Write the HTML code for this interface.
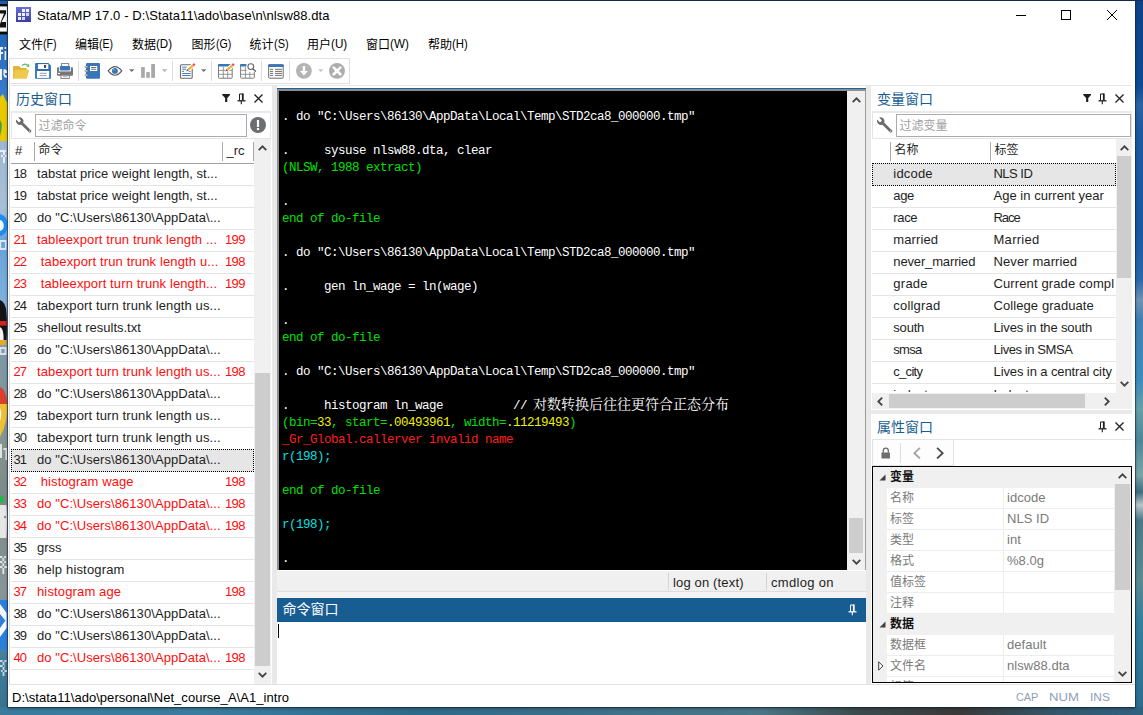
<!DOCTYPE html>
<html lang="zh"><head><meta charset="utf-8"><title>Stata/MP 17.0</title>
<style>
html,body{margin:0;padding:0}
body{width:1143px;height:715px;overflow:hidden;position:relative;background:#2d6a8a;font-family:"Liberation Sans",sans-serif;font-size:13px;color:#1e1e1e}
.b,.t,.cj,.ic{position:absolute}
.b{box-sizing:border-box}
.t{white-space:pre;line-height:16px;height:16px}
.cj{overflow:visible}
.cjt{font-family:"Liberation Sans","Noto Sans CJK SC",sans-serif}
.cjm{font-family:"Liberation Mono","Noto Serif CJK SC",serif}
.m{font-family:"Liberation Mono",monospace}
#desk-l{position:absolute;left:0;top:0;width:8px;height:715px;overflow:hidden;background:#2a6cbc}
#desk-r{position:absolute;left:1135px;top:0;width:8px;height:715px;background:linear-gradient(180deg,#0c438a 0,#0e4a94 85px,#2b64a6 105px,#1e5aa2 130px,#1858a4 230px,#2a68ac 280px,#6f93b4 300px,#3f80b4 320px,#3a8cbe 380px,#66a0a8 408px,#4a8799 440px,#7aa4a8 475px,#3d6c7c 492px,#b9c6c8 505px,#4a7886 520px,#5c8a92 580px,#34809f 620px,#2d7497 680px,#2a6a8c 715px)}
#desk-b{position:absolute;left:0;top:707px;width:1143px;height:8px;background:linear-gradient(90deg,#3a7a9c 0,#3b7c9e 200px,#2f6a88 420px,#3d7088 600px,#4a7686 760px,#3c4a4c 860px,#3a3a38 960px,#34586c 1060px,#2f6280 1143px)}
#desk-t{position:absolute;left:0;top:0;width:1143px;height:1px;background:#15335c}
#win{position:absolute;left:8px;top:1px;width:1127px;height:706px;background:#fff;box-shadow:0 0 0 1px rgba(20,40,70,.55),0 1px 3px rgba(0,0,0,.5)}
.rl{white-space:pre;font-size:12.5px;letter-spacing:-0.5px;line-height:17px;height:17px}

</style></head>
<body>
<div id="desk-l"><svg width="8" height="715" viewBox="0 0 8 715" shape-rendering="auto"><defs><linearGradient id="dl1" x1="0" y1="0" x2="0" y2="1"><stop offset="0" stop-color="#1c5dae"/><stop offset="0.048" stop-color="#2767ba"/><stop offset="0.13" stop-color="#3a7ccc"/><stop offset="0.2" stop-color="#9bb7d3"/><stop offset="0.29" stop-color="#a9c0d6"/><stop offset="0.34" stop-color="#6aa3d8"/><stop offset="0.42" stop-color="#7fb0dc"/><stop offset="0.5" stop-color="#7e98a6"/><stop offset="0.62" stop-color="#85948f"/><stop offset="0.7" stop-color="#7b8a86"/><stop offset="0.83" stop-color="#8a9598"/><stop offset="0.92" stop-color="#447f9d"/><stop offset="1" stop-color="#36708c"/></linearGradient></defs><rect width="8" height="715" fill="url(#dl1)"/><rect x="0" y="4" width="7.4" height="30.4" fill="#0a0a0a"/><rect x="0" y="6.4" width="7" height="25.2" fill="#f6f6f6"/><path d="M0 10.2H6V13.4L1.5 22H6V27.4H0V24L4 13.6H0Z" fill="#111"/><path d="M0 47H3V49.5H1V52H3V54H1V60H0ZM4.6 47H6.2V49H4.6ZM4.6 51H6.2V60H4.6Z" fill="#f2f2f2"/><path d="M0 69H2V80H0ZM3.4 69.5Q7 68 7.2 73H4.6Q5 76 7 75.6V77.6Q3.2 78.4 3.4 73Z" fill="#f2f2f2"/><path d="M0 97L3 94L5.5 100L8 103V141H0Z" fill="#e9c900"/><path d="M0 120Q3.5 124 0 136Z" fill="#3aa24c"/><path d="M0 150H6V152H0ZM1 155H6.5V157H1ZM3 152V163H5V152Z" fill="#eef3f8" opacity=".9"/><path d="M0 214Q8 216 7.6 226Q7 235 0 236V231Q3.6 230 3.6 225.5Q3.6 221 0 220Z" fill="#1f8df0"/><path d="M0 220Q3.6 221 3.6 225.5Q3.6 230 0 231Z" fill="#f4f8fc"/><path d="M0 240H6.5V250H0ZM1.2 242V248H5V242Z" fill="#f0f4f8" opacity=".85"/><path d="M0 300Q5.5 302 6.4 312Q7.4 324 6.6 340H0Z" fill="#141414"/><path d="M0 321H6.6V325.6H0Z" fill="#d32222"/><path d="M0 327Q4 329 3.6 340H0Z" fill="#f2f2f2"/><path d="M0 340H6V345H0Z" fill="#e8a820"/><path d="M0 347H6.5V355H0ZM1.4 349V353H4.6V349Z" fill="#e8eef2" opacity=".85"/><path d="M0 387Q6 389 7.4 404L0 404Z" fill="#d9412c"/><path d="M0 404H7.4Q8 422 0 437Z" fill="#efc132"/><path d="M0 408Q2.6 414 0 421Z" fill="#f8f8f8"/><path d="M0 444H2V458H0ZM3.4 448H7V460H5.4V450H3.4Z" fill="#eef2f2" opacity=".85"/><path d="M0 496H3.4V503H0Z" fill="#27b44a"/><path d="M0 505H6.4Q7.6 520 6.4 538H0Z" fill="#e6e6e6"/><circle cx="5" cy="517" r="1.2" fill="#8a8a8a"/><path d="M0 556H6V558H0ZM0 561H6V563H0ZM0 566H7V568H0ZM2.4 556V574H4.2V556Z" fill="#eef2f2" opacity=".85"/><rect x="0" y="600" width="8" height="50" fill="#2b80da"/><path d="M0 604L6.6 613V622L0 614ZM0 628L6.6 619V628L0 637Z" fill="#f4f7fb"/><path d="M0 660H6.5V662H0ZM0 665H5V667H0ZM1 670H7V672H1ZM2.6 660V676H4.4V660Z" fill="#e8eef2" opacity=".8"/></svg></div><div id="desk-r"></div><div id="desk-b"></div><div id="desk-t"></div>
<div id="win"></div>
<svg class="ic" style="left:16px;top:7px" width="15" height="15" viewBox="0 0 15 15"><defs><linearGradient id="lg1" x1="0" y1="0" x2="0" y2="1"><stop offset="0" stop-color="#6a6fd6"/><stop offset="1" stop-color="#3a3f9c"/></linearGradient></defs><rect width="15" height="15" fill="url(#lg1)"/><g fill="#fff" opacity=".92"><rect x="6" y="2" width="3" height="3"/><rect x="10" y="2" width="3" height="3"/><rect x="2" y="6" width="3" height="3"/><rect x="6" y="6" width="3" height="3"/><rect x="10" y="6" width="3" height="3" opacity=".8"/><rect x="2" y="10" width="3" height="3"/><rect x="6" y="10" width="3" height="3" opacity=".85"/></g></svg>
<span class="t" style="left:37px;top:7.50px;font-size:13px;color:#000;letter-spacing:0.099px;">Stata/MP 17.0 - D:\Stata11\ado\base\n\nlsw88.dta</span>
<svg class="ic" style="left:1010px;top:5px" width="115" height="20" viewBox="0 0 115 20" fill="none" stroke="#000" stroke-width="1"><path d="M6 10.5H16"/><rect x="51.5" y="5.5" width="9" height="9"/><path d="M97 5L107 15M107 5L97 15"/></svg>
<span class="t cjt" style="left:19px;top:36.5px;font-size:12px;color:#000;">文件</span>
<span class="t" style="left:43.2px;top:35.90px;font-size:12.4px;color:#000;transform:scaleX(0.8590);transform-origin:0 0;">(F)</span>
<span class="t cjt" style="left:75px;top:36.5px;font-size:12px;color:#000;">编辑</span>
<span class="t" style="left:99.2px;top:35.90px;font-size:12.4px;color:#000;transform:scaleX(0.8470);transform-origin:0 0;">(E)</span>
<span class="t cjt" style="left:132px;top:36.5px;font-size:12px;color:#000;">数据</span>
<span class="t" style="left:156.2px;top:35.90px;font-size:12.4px;color:#000;transform:scaleX(0.9353);transform-origin:0 0;">(D)</span>
<span class="t cjt" style="left:191.5px;top:36.5px;font-size:12px;color:#000;">图形</span>
<span class="t" style="left:215.7px;top:35.90px;font-size:12.4px;color:#000;transform:scaleX(0.8546);transform-origin:0 0;">(G)</span>
<span class="t cjt" style="left:249.5px;top:36.5px;font-size:12px;color:#000;">统计</span>
<span class="t" style="left:273.7px;top:35.90px;font-size:12.4px;color:#000;transform:scaleX(0.8833);transform-origin:0 0;">(S)</span>
<span class="t cjt" style="left:307px;top:36.5px;font-size:12px;color:#000;">用户</span>
<span class="t" style="left:331.2px;top:35.90px;font-size:12.4px;color:#000;transform:scaleX(0.9411);transform-origin:0 0;">(U)</span>
<span class="t cjt" style="left:366px;top:36.5px;font-size:12px;color:#000;">窗口</span>
<span class="t" style="left:390.2px;top:35.90px;font-size:12.4px;color:#000;transform:scaleX(0.9418);transform-origin:0 0;">(W)</span>
<span class="t cjt" style="left:428px;top:36.5px;font-size:12px;color:#000;">帮助</span>
<span class="t" style="left:452.2px;top:35.90px;font-size:12.4px;color:#000;transform:scaleX(0.9179);transform-origin:0 0;">(H)</span>
<div class="b" style="left:9px;top:58px;width:341px;height:26px;border:1px solid #e0e0e0;background:#fff"></div>
<div class="b" style="left:78px;top:61px;width:1px;height:20px;background:#dcdcdc;"></div>
<div class="b" style="left:172px;top:61px;width:1px;height:20px;background:#dcdcdc;"></div>
<div class="b" style="left:211px;top:61px;width:1px;height:20px;background:#dcdcdc;"></div>
<div class="b" style="left:261px;top:61px;width:1px;height:20px;background:#dcdcdc;"></div>
<div class="b" style="left:289px;top:61px;width:1px;height:20px;background:#dcdcdc;"></div>
<div class="b" style="left:9px;top:684px;width:1126px;height:1px;background:#e2e2e2;"></div>
<span class="t" style="left:12px;top:689.80px;font-size:13px;color:#000;letter-spacing:0.043px;">D:\stata11\ado\personal\Net_course_A\A1_intro</span>
<span class="t" style="left:1016.3px;top:689.35px;font-size:11.7px;color:#8fa0b6;transform:scaleX(0.9311);transform-origin:0 0;">CAP</span>
<span class="t" style="left:1049.2px;top:689.35px;font-size:11.7px;color:#8fa0b6;transform:scaleX(1.1259);transform-origin:0 0;">NUM</span>
<span class="t" style="left:1090.3px;top:689.35px;font-size:11.7px;color:#8fa0b6;transform:scaleX(1.0254);transform-origin:0 0;">INS</span>
<svg class="ic" style="left:0;top:0" width="360" height="90" viewBox="0 0 360 90"><path d="M13.1 66.6Q13.1 66 13.7 66H19.2L21 68.1H26.2Q26.8 68.1 26.8 68.7V71H13.1Z" fill="#e3b43a"/><path d="M13.1 70.6V78.2Q13.1 78.8 13.7 78.8H26.3Q26.8 78.8 26.9 78.3L29.1 70.6Q29.2 70 28.6 70H15Q14.6 70 14.5 70.4L13.1 76Z" fill="#efc94c"/><path d="M13.1 70.2V78.2Q13.1 78.8 13.7 78.8L14.8 70Z" fill="#e3b43a"/><path d="M22 65.6Q24.6 63 27.4 65" fill="none" stroke="#5cb85c" stroke-width="1.3"/><path d="M26.2 66.5L29.1 63.4L29.2 67Z" fill="#5cb85c"/><path d="M36 62.9H48.4L50.9 65.4V77.9Q50.9 78.8 50 78.8H36Q35.1 78.8 35.1 77.9V63.8Q35.1 62.9 36 62.9Z" fill="#2f6eb5"/><rect x="37.9" y="64.1" width="10.4" height="4.9" fill="#fff"/><rect x="44" y="65" width="2.1" height="2.9" fill="#4a4a4a"/><rect x="36.9" y="71" width="12.3" height="6.9" fill="#fff"/><path d="M39.7 73.3H46.7M39.7 75.6H46.7" stroke="#909090" stroke-width="0.9"/><rect x="61.5" y="63.6" width="7.2" height="3.4" fill="#fff" stroke="#7a7a7a" stroke-width="0.9"/><path d="M57 68.2Q57 67.2 58 67.2H72Q73 67.2 73 68.2V74.8Q73 75.8 72 75.8H58Q57 75.8 57 74.8Z" fill="#777"/><path d="M59.1 66H70.8V71.4H59.1Z" fill="#fff"/><path d="M59.9 66H70V69.6Q70 70.6 69 70.6H60.9Q59.9 70.6 59.9 69.6Z" fill="#3976b8"/><rect x="58" y="72.9" width="2" height="1.1" fill="#fff"/><rect x="60.9" y="75.2" width="8.4" height="3.2" fill="#fff" stroke="#777" stroke-width="0.9"/><path d="M63 76.7H67.5" stroke="#9a9a9a" stroke-width="0.8"/><rect x="86" y="63" width="14" height="15.8" rx="1.2" fill="#3976b8"/><rect x="90" y="65.9" width="7.3" height="5" rx="0.4" fill="#fff"/><path d="M91.1 67.5H96.2M91.1 69.3H96.2" stroke="#4a4a4a" stroke-width="0.8"/><g fill="#fff" stroke="#4a4a4a" stroke-width="0.55"><rect x="84.9" y="65.9" width="3" height="1.7" rx="0.85"/><rect x="84.9" y="70.1" width="3" height="1.7" rx="0.85"/><rect x="84.9" y="74.2" width="3" height="1.7" rx="0.85"/></g><path d="M108.2 70.9Q115 62.2 121.8 70.9Q115 79.6 108.2 70.9Z" fill="#fff" stroke="#5c5c5c" stroke-width="1.15"/><circle cx="114.9" cy="70.9" r="2.95" fill="#3976b8"/><circle cx="113.9" cy="69.8" r="0.8" fill="#86b0de"/><path d="M129 69.3H134.4L131.7 72.1Z" fill="#707070"/><g fill="#a8a8a8"><rect x="141.1" y="67.1" width="3.7" height="10.7"/><rect x="146.3" y="72.1" width="3.5" height="5.7"/><rect x="151.2" y="64" width="3.8" height="13.8"/></g><path d="M161.9 69.3H167.3L164.6 72.1Z" fill="#b2b2b2"/><rect x="180.5" y="64.8" width="11.7" height="13.4" rx="1" fill="#fff" stroke="#6a6a6a" stroke-width="1.1"/><path d="M182.2 67.2H186.6M182.2 69.3H186M182.2 71.4H184M188.6 71.4H190.6M182.2 73.5H190.6M182.2 75.5H190.6" stroke="#3976b8" stroke-width="0.95"/><g transform="translate(186.2 71.4) rotate(-41)"><path d="M0 0L2.4 -2.05H11.9V2.05H2.4Z" fill="#fff"/><path d="M0 0L2.6 -1.15V1.15Z" fill="#6a5a40"/><path d="M2.4 -1.15H9.3V1.15H2.4Z" fill="#f2b43a"/><path d="M9.3 -1.15H11.3V1.15H9.3Z" fill="#e84a66"/></g><path d="M201 69.3H206.4L203.7 72.1Z" fill="#707070"/><rect x="218.5" y="64.6" width="13.7" height="13.6" rx="0.9" fill="#fff" stroke="#7c7c7c" stroke-width="1"/><path d="M218 65Q218 64.1 218.9 64.1H232.7V66.6H218Z" fill="#3976b8"/><path d="M223.3 66.6V78.2M227.7 66.6V78.2M218.5 70.4H232.2M218.5 74.3H232.2" stroke="#8c8c8c" stroke-width="0.9"/><g transform="translate(225.4 71.4) rotate(-41)"><path d="M0 0L2.4 -2.05H11.9V2.05H2.4Z" fill="#fff"/><path d="M0 0L2.6 -1.15V1.15Z" fill="#6a5a40"/><path d="M2.4 -1.15H9.3V1.15H2.4Z" fill="#f2b43a"/><path d="M9.3 -1.15H11.3V1.15H9.3Z" fill="#e84a66"/></g><rect x="240.6" y="64.6" width="13.7" height="13.6" rx="0.9" fill="#fff" stroke="#7c7c7c" stroke-width="1"/><path d="M240.1 65Q240.1 64.1 241.0 64.1H246.4V66.6H240.1Z" fill="#3976b8"/><path d="M245.4 66.6V78.2M249.79999999999998 66.6V78.2M240.6 70.4H254.29999999999998M240.6 74.3H254.29999999999998" stroke="#8c8c8c" stroke-width="0.9"/><rect x="246.6" y="62.6" width="9.6" height="9.4" fill="#fff"/><circle cx="250.8" cy="66.6" r="2.9" fill="#fff" stroke="#6a6a6a" stroke-width="1.1"/><path d="M252.9 68.8L255.4 71.3" stroke="#6a6a6a" stroke-width="1.5" stroke-linecap="round"/><rect x="268.7" y="64.8" width="14.5" height="13.4" rx="0.9" fill="#fff" stroke="#6a6a6a" stroke-width="1"/><path d="M268.2 65.2Q268.2 64.3 269.1 64.3H282.8Q283.7 64.3 283.7 65.2V66.9H268.2Z" fill="#3976b8"/><path d="M270 69.3H273.2M275 69.3H282M270 71.4H273.2M275 71.4H282M270 73.4H273.2M275 73.4H282M270 75.4H273.2M275 75.4H282" stroke="#555" stroke-width="0.85"/><circle cx="303.9" cy="70.8" r="7.9" fill="#b4b4b4"/><path d="M302.7 66H305.1V71H307.9L303.9 75.6L299.9 71H302.7Z" fill="#fff"/><path d="M318 69.3H323.4L320.7 72.1Z" fill="#c4c4c4"/><circle cx="337" cy="70.9" r="7.95" fill="#adadad"/><path d="M333.7 67.6L340.3 74.2M340.3 67.6L333.7 74.2" stroke="#fff" stroke-width="2.7" stroke-linecap="round"/></svg>
<div class="b" style="left:9px;top:84px;width:1px;height:600px;background:#dcdcdc;"></div>
<div class="b" style="left:11px;top:85px;width:261px;height:1px;background:#e6e6e6;"></div>
<div class="b" style="left:272px;top:86px;width:5px;height:598px;background:#e9e9e9;"></div>
<span class="t cjt" style="left:16px;top:90.5px;font-size:14px;color:#185d92;">历史窗口</span>
<svg class="ic" style="left:222px;top:94px" width="8.4" height="8" viewBox="0 0 9 9"><path d="M0 0H9V1L5.7 4.4V9H3.3V4.4L0 1Z" fill="#1e1e1e"/></svg><svg class="ic" style="left:237px;top:93px" width="9" height="12" viewBox="0 0 9 12" fill="none" stroke="#1e1e1e"><path d="M2.5 7.5V1H6" stroke-width="1"/><path d="M5.8 0.5V7.5" stroke-width="1.8"/><path d="M0.5 7.8H8.5" stroke-width="1.3"/><path d="M4.3 8V11.3" stroke-width="1.1"/></svg><svg class="ic" style="left:254px;top:94px" width="9" height="9" viewBox="0 0 9 9" fill="none" stroke="#1e1e1e" stroke-width="1.25"><path d="M0.5 0.5L8.5 8.5M8.5 0.5L0.5 8.5"/></svg>
<div class="b" style="left:11px;top:111px;width:260px;height:28px;border:1px solid #e4e4e4;border-top:2px solid #e9e9e9"></div>
<svg class="ic" style="left:16px;top:117px;overflow:visible" width="16" height="16" viewBox="0 0 16 16"><g transform="translate(-0.6 -0.2) rotate(45 8 8)"><path d="M4 6.65H17.2A1.35 1.35 0 0 1 17.2 9.35H4Z" fill="#6b6b6b"/><circle cx="2.8" cy="8" r="3.6" fill="#6b6b6b"/><path d="M-1.5 6.6H3.2V9.4H-1.5Z" fill="#fff"/><circle cx="16.9" cy="8" r="0.55" fill="#fff"/></g></svg>
<div class="b" style="left:35px;top:114px;width:212px;height:23px;background:#fff;border:1px solid #ababab"></div>
<span class="t cjt" style="left:38.5px;top:117.5px;font-size:12px;color:#9f9f9f;">过滤命令</span>
<svg class="ic" style="left:250px;top:116.5px" width="16" height="16" viewBox="0 0 16 16"><circle cx="8" cy="8" r="8" fill="#6d6e72"/><rect x="6.9" y="3" width="2.2" height="7" fill="#fff"/><rect x="6.9" y="11" width="2.2" height="2.1" fill="#fff"/></svg>
<span class="t" style="left:15px;top:142.50px;font-size:13px;color:#1e1e1e;">#</span>
<div class="b" style="left:34px;top:142px;width:1px;height:19px;background:#a8a8a8;"></div>
<span class="t cjt" style="left:38.5px;top:142px;font-size:12px;color:#1e1e1e;">命令</span>
<div class="b" style="left:222px;top:142px;width:1px;height:19px;background:#a8a8a8;"></div>
<span class="t" style="left:226.5px;top:142.50px;font-size:13px;color:#1e1e1e;">_rc</span>
<div class="b" style="left:253px;top:142px;width:1px;height:19px;background:#a8a8a8;"></div>
<div class="b" style="left:11px;top:163px;width:243px;height:1px;background:#a0a0a0;"></div>
<div class="b" style="left:11px;top:185px;width:243px;height:1px;background:#e4e4e4;"></div>
<span class="t" style="left:13.5px;top:165.70px;font-size:13px;color:#1e1e1e;letter-spacing:-1.06px;">18</span>
<span class="t" style="left:37px;top:165.70px;font-size:13px;color:#1e1e1e;letter-spacing:0.042px;">tabstat price weight length, st...</span>
<div class="b" style="left:11px;top:207px;width:243px;height:1px;background:#e4e4e4;"></div>
<span class="t" style="left:13.5px;top:187.70px;font-size:13px;color:#1e1e1e;letter-spacing:-1.06px;">19</span>
<span class="t" style="left:37px;top:187.70px;font-size:13px;color:#1e1e1e;letter-spacing:0.042px;">tabstat price weight length, st...</span>
<div class="b" style="left:11px;top:229px;width:243px;height:1px;background:#e4e4e4;"></div>
<span class="t" style="left:13.5px;top:209.70px;font-size:13px;color:#1e1e1e;letter-spacing:-1.06px;">20</span>
<span class="t" style="left:37px;top:209.70px;font-size:13px;color:#1e1e1e;letter-spacing:0.067px;">do &quot;C:\Users\86130\AppData\...</span>
<div class="b" style="left:11px;top:251px;width:243px;height:1px;background:#e4e4e4;"></div>
<span class="t" style="left:13.5px;top:231.70px;font-size:13px;color:#ff0d0d;letter-spacing:-1.06px;">21</span>
<span class="t" style="left:37px;top:231.70px;font-size:13px;color:#ff0d0d;letter-spacing:0.115px;">tableexport trun trunk length ...</span>
<span class="t" style="left:225px;top:231.70px;font-size:13px;color:#ff0d0d;letter-spacing:-0.645px;">199</span>
<div class="b" style="left:11px;top:273px;width:243px;height:1px;background:#e4e4e4;"></div>
<span class="t" style="left:13.5px;top:253.70px;font-size:13px;color:#ff0d0d;letter-spacing:-1.06px;">22</span>
<span class="t" style="left:40.8px;top:253.70px;font-size:13px;color:#ff0d0d;letter-spacing:0.134px;">tabexport trun trunk length u...</span>
<span class="t" style="left:225px;top:253.70px;font-size:13px;color:#ff0d0d;letter-spacing:-0.645px;">198</span>
<div class="b" style="left:11px;top:295px;width:243px;height:1px;background:#e4e4e4;"></div>
<span class="t" style="left:13.5px;top:275.70px;font-size:13px;color:#ff0d0d;letter-spacing:-1.06px;">23</span>
<span class="t" style="left:40.8px;top:275.70px;font-size:13px;color:#ff0d0d;letter-spacing:0.116px;">tableexport turn trunk length...</span>
<span class="t" style="left:225px;top:275.70px;font-size:13px;color:#ff0d0d;letter-spacing:-0.645px;">199</span>
<div class="b" style="left:11px;top:317px;width:243px;height:1px;background:#e4e4e4;"></div>
<span class="t" style="left:13.5px;top:297.70px;font-size:13px;color:#1e1e1e;letter-spacing:-1.06px;">24</span>
<span class="t" style="left:37px;top:297.70px;font-size:13px;color:#1e1e1e;letter-spacing:0.114px;">tabexport turn trunk length us...</span>
<div class="b" style="left:11px;top:339px;width:243px;height:1px;background:#e4e4e4;"></div>
<span class="t" style="left:13.5px;top:319.70px;font-size:13px;color:#1e1e1e;letter-spacing:-1.06px;">25</span>
<span class="t" style="left:37px;top:319.70px;font-size:13px;color:#1e1e1e;letter-spacing:-0.013px;">shellout results.txt</span>
<div class="b" style="left:11px;top:361px;width:243px;height:1px;background:#e4e4e4;"></div>
<span class="t" style="left:13.5px;top:341.70px;font-size:13px;color:#1e1e1e;letter-spacing:-1.06px;">26</span>
<span class="t" style="left:37px;top:341.70px;font-size:13px;color:#1e1e1e;letter-spacing:0.067px;">do &quot;C:\Users\86130\AppData\...</span>
<div class="b" style="left:11px;top:383px;width:243px;height:1px;background:#e4e4e4;"></div>
<span class="t" style="left:13.5px;top:363.70px;font-size:13px;color:#ff0d0d;letter-spacing:-1.06px;">27</span>
<span class="t" style="left:37px;top:363.70px;font-size:13px;color:#ff0d0d;letter-spacing:0.114px;">tabexport turn trunk length us...</span>
<span class="t" style="left:225px;top:363.70px;font-size:13px;color:#ff0d0d;letter-spacing:-0.645px;">198</span>
<div class="b" style="left:11px;top:405px;width:243px;height:1px;background:#e4e4e4;"></div>
<span class="t" style="left:13.5px;top:385.70px;font-size:13px;color:#1e1e1e;letter-spacing:-1.06px;">28</span>
<span class="t" style="left:37px;top:385.70px;font-size:13px;color:#1e1e1e;letter-spacing:0.067px;">do &quot;C:\Users\86130\AppData\...</span>
<div class="b" style="left:11px;top:427px;width:243px;height:1px;background:#e4e4e4;"></div>
<span class="t" style="left:13.5px;top:407.70px;font-size:13px;color:#1e1e1e;letter-spacing:-1.06px;">29</span>
<span class="t" style="left:37px;top:407.70px;font-size:13px;color:#1e1e1e;letter-spacing:0.114px;">tabexport turn trunk length us...</span>
<div class="b" style="left:11px;top:449px;width:243px;height:1px;background:#e4e4e4;"></div>
<span class="t" style="left:13.5px;top:429.70px;font-size:13px;color:#1e1e1e;letter-spacing:-1.06px;">30</span>
<span class="t" style="left:37px;top:429.70px;font-size:13px;color:#1e1e1e;letter-spacing:0.114px;">tabexport turn trunk length us...</span>
<div class="b" style="left:11px;top:449px;width:243px;height:23px;background:#e6e6e6;border:1px dotted #000"></div>
<span class="t" style="left:13.5px;top:451.70px;font-size:13px;color:#1e1e1e;letter-spacing:-1.06px;">31</span>
<span class="t" style="left:37px;top:451.70px;font-size:13px;color:#1e1e1e;letter-spacing:0.067px;">do &quot;C:\Users\86130\AppData\...</span>
<div class="b" style="left:11px;top:493px;width:243px;height:1px;background:#e4e4e4;"></div>
<span class="t" style="left:13.5px;top:473.70px;font-size:13px;color:#ff0d0d;letter-spacing:-1.06px;">32</span>
<span class="t" style="left:40.8px;top:473.70px;font-size:13px;color:#ff0d0d;letter-spacing:0.072px;">histogram wage</span>
<span class="t" style="left:225px;top:473.70px;font-size:13px;color:#ff0d0d;letter-spacing:-0.645px;">198</span>
<div class="b" style="left:11px;top:515px;width:243px;height:1px;background:#e4e4e4;"></div>
<span class="t" style="left:13.5px;top:495.70px;font-size:13px;color:#ff0d0d;letter-spacing:-1.06px;">33</span>
<span class="t" style="left:37px;top:495.70px;font-size:13px;color:#ff0d0d;letter-spacing:0.067px;">do &quot;C:\Users\86130\AppData\...</span>
<span class="t" style="left:225px;top:495.70px;font-size:13px;color:#ff0d0d;letter-spacing:-0.645px;">198</span>
<div class="b" style="left:11px;top:537px;width:243px;height:1px;background:#e4e4e4;"></div>
<span class="t" style="left:13.5px;top:517.70px;font-size:13px;color:#ff0d0d;letter-spacing:-1.06px;">34</span>
<span class="t" style="left:37px;top:517.70px;font-size:13px;color:#ff0d0d;letter-spacing:0.067px;">do &quot;C:\Users\86130\AppData\...</span>
<span class="t" style="left:225px;top:517.70px;font-size:13px;color:#ff0d0d;letter-spacing:-0.645px;">198</span>
<div class="b" style="left:11px;top:559px;width:243px;height:1px;background:#e4e4e4;"></div>
<span class="t" style="left:13.5px;top:539.70px;font-size:13px;color:#1e1e1e;letter-spacing:-1.06px;">35</span>
<span class="t" style="left:37px;top:539.70px;font-size:13px;color:#1e1e1e;letter-spacing:-0.053px;">grss</span>
<div class="b" style="left:11px;top:581px;width:243px;height:1px;background:#e4e4e4;"></div>
<span class="t" style="left:13.5px;top:561.70px;font-size:13px;color:#1e1e1e;letter-spacing:-1.06px;">36</span>
<span class="t" style="left:37px;top:561.70px;font-size:13px;color:#1e1e1e;letter-spacing:0.164px;">help histogram</span>
<div class="b" style="left:11px;top:603px;width:243px;height:1px;background:#e4e4e4;"></div>
<span class="t" style="left:13.5px;top:583.70px;font-size:13px;color:#ff0d0d;letter-spacing:-1.06px;">37</span>
<span class="t" style="left:37px;top:583.70px;font-size:13px;color:#ff0d0d;letter-spacing:0.143px;">histogram age</span>
<span class="t" style="left:225px;top:583.70px;font-size:13px;color:#ff0d0d;letter-spacing:-0.645px;">198</span>
<div class="b" style="left:11px;top:625px;width:243px;height:1px;background:#e4e4e4;"></div>
<span class="t" style="left:13.5px;top:605.70px;font-size:13px;color:#1e1e1e;letter-spacing:-1.06px;">38</span>
<span class="t" style="left:37px;top:605.70px;font-size:13px;color:#1e1e1e;letter-spacing:0.067px;">do &quot;C:\Users\86130\AppData\...</span>
<div class="b" style="left:11px;top:647px;width:243px;height:1px;background:#e4e4e4;"></div>
<span class="t" style="left:13.5px;top:627.70px;font-size:13px;color:#1e1e1e;letter-spacing:-1.06px;">39</span>
<span class="t" style="left:37px;top:627.70px;font-size:13px;color:#1e1e1e;letter-spacing:0.067px;">do &quot;C:\Users\86130\AppData\...</span>
<div class="b" style="left:11px;top:669px;width:243px;height:1px;background:#e4e4e4;"></div>
<span class="t" style="left:13.5px;top:649.70px;font-size:13px;color:#ff0d0d;letter-spacing:-1.06px;">40</span>
<span class="t" style="left:37px;top:649.70px;font-size:13px;color:#ff0d0d;letter-spacing:0.067px;">do &quot;C:\Users\86130\AppData\...</span>
<span class="t" style="left:225px;top:649.70px;font-size:13px;color:#ff0d0d;letter-spacing:-0.645px;">198</span>
<div class="b" style="left:254px;top:139px;width:17px;height:545px;background:#f0f0f0;"></div>
<svg class="ic" style="left:258px;top:145px" width="9" height="6" viewBox="0 0 9 6" fill="none" stroke="#444" stroke-width="1.8"><path d="M0.7 5.2L4.5 1.3L8.3 5.2"/></svg>
<div class="b" style="left:255px;top:373px;width:15px;height:293px;background:#cdcdcd;"></div>
<svg class="ic" style="left:258px;top:672px" width="9" height="6" viewBox="0 0 9 6" fill="none" stroke="#444" stroke-width="1.8"><path d="M0.7 0.8L4.5 4.7L8.3 0.8"/></svg>
<div class="b" style="left:272px;top:85px;width:599px;height:1px;background:#e6e6e6;"></div>
<div class="b" style="left:277px;top:88px;width:589px;height:1px;background:#1f6196;"></div>
<div class="b" style="left:277px;top:89px;width:589px;height:482px;background:#000;border-top:2px solid #8e8e8e;border-left:2px solid #8e8e8e;border-right:1px solid #9a9a9a"></div>
<div class="b" style="left:847px;top:91px;width:18px;height:479px;background:#f0f0f0;"></div>
<svg class="ic" style="left:851.5px;top:97px" width="9" height="6" viewBox="0 0 9 6" fill="none" stroke="#444" stroke-width="1.8"><path d="M0.7 5.2L4.5 1.3L8.3 5.2"/></svg>
<div class="b" style="left:848.5px;top:518px;width:14.5px;height:34.5px;background:#cdcdcd;"></div>
<svg class="ic" style="left:851.5px;top:559px" width="9" height="6" viewBox="0 0 9 6" fill="none" stroke="#444" stroke-width="1.8"><path d="M0.7 0.8L4.5 4.7L8.3 0.8"/></svg>
<div class="b m rl" style="left:282px;top:109px"><span style="color:#ffffff">. do &quot;C:\Users\86130\AppData\Local\Temp\STD2ca8_000000.tmp&quot;</span></div>
<div class="b m rl" style="left:282px;top:143px"><span style="color:#ffffff">.     sysuse nlsw88.dta, clear</span></div>
<div class="b m rl" style="left:282px;top:160px"><span style="color:#00e000">(NLSW, 1988 extract)</span></div>
<div class="b m rl" style="left:282px;top:194px"><span style="color:#ffffff">. </span></div>
<div class="b m rl" style="left:282px;top:211px"><span style="color:#00e000">end of do-file</span></div>
<div class="b m rl" style="left:282px;top:245px"><span style="color:#ffffff">. do &quot;C:\Users\86130\AppData\Local\Temp\STD2ca8_000000.tmp&quot;</span></div>
<div class="b m rl" style="left:282px;top:279px"><span style="color:#ffffff">.     gen ln_wage = ln(wage)</span></div>
<div class="b m rl" style="left:282px;top:313px"><span style="color:#ffffff">. </span></div>
<div class="b m rl" style="left:282px;top:330px"><span style="color:#00e000">end of do-file</span></div>
<div class="b m rl" style="left:282px;top:364px"><span style="color:#ffffff">. do &quot;C:\Users\86130\AppData\Local\Temp\STD2ca8_000000.tmp&quot;</span></div>
<div class="b m rl" style="left:282px;top:398px"><span style="color:#ffffff">.     histogram ln_wage          // </span></div>
<div class="b m rl" style="left:282px;top:415px"><span style="color:#00e000">(bin=</span><span style="color:#f0f000">33</span><span style="color:#00e000">, start=</span><span style="color:#f0f000">.00493961</span><span style="color:#00e000">, width=</span><span style="color:#f0f000">.11219493</span><span style="color:#00e000">)</span></div>
<div class="b m rl" style="left:282px;top:432px"><span style="color:#ff1c1c">_Gr_Global.callerver invalid name</span></div>
<div class="b m rl" style="left:282px;top:449px"><span style="color:#00e0e0">r(198);</span></div>
<div class="b m rl" style="left:282px;top:483px"><span style="color:#00e000">end of do-file</span></div>
<div class="b m rl" style="left:282px;top:517px"><span style="color:#00e0e0">r(198);</span></div>
<div class="b m rl" style="left:282px;top:551px"><span style="color:#ffffff">. </span></div>
<span class="t cjm" style="left:533px;top:396.8px;font-size:14px;color:#ffffff;">对数转换后往往更符合正态分布</span>
<div class="b" style="left:277px;top:570px;width:589px;height:22px;background:#f0f0f0;border-top:1px solid #fff"></div>
<div class="b" style="left:668px;top:573px;width:1px;height:17px;background:#d4d4d4;"></div>
<div class="b" style="left:766px;top:573px;width:1px;height:17px;background:#d4d4d4;"></div>
<span class="t" style="left:673px;top:574.50px;font-size:13px;color:#1e1e1e;letter-spacing:0.155px;">log on (text)</span>
<span class="t" style="left:771px;top:574.50px;font-size:13px;color:#1e1e1e;letter-spacing:0.315px;">cmdlog on</span>
<div class="b" style="left:277px;top:591px;width:589px;height:1px;background:#dedede;"></div>
<div class="b" style="left:277px;top:592px;width:589px;height:6px;background:#f4f4f4;"></div>
<div class="b" style="left:277px;top:598px;width:589px;height:24px;background:#185d92;"></div>
<span class="t cjt" style="left:282.6px;top:601.4px;font-size:14px;color:#fff;">命令窗口</span>
<svg class="ic" style="left:848px;top:604px" width="9" height="12" viewBox="0 0 9 12" fill="none" stroke="#fff"><path d="M2.5 7.5V1H6" stroke-width="1"/><path d="M5.8 0.5V7.5" stroke-width="1.8"/><path d="M0.5 7.8H8.5" stroke-width="1.3"/><path d="M4.3 8V11.3" stroke-width="1.1"/></svg>
<div class="b" style="left:277px;top:622px;width:589px;height:62px;background:#fff;"></div>
<div class="b" style="left:278px;top:624px;width:1px;height:14px;background:#000;"></div>
<div class="b" style="left:866px;top:86px;width:5px;height:598px;background:#e9e9e9;"></div>
<div class="b" style="left:871px;top:85px;width:261px;height:1px;background:#e6e6e6;"></div>
<span class="t cjt" style="left:877px;top:90.5px;font-size:14px;color:#185d92;">变量窗口</span>
<svg class="ic" style="left:1083px;top:94px" width="8.4" height="8" viewBox="0 0 9 9"><path d="M0 0H9V1L5.7 4.4V9H3.3V4.4L0 1Z" fill="#1e1e1e"/></svg><svg class="ic" style="left:1098px;top:93px" width="9" height="12" viewBox="0 0 9 12" fill="none" stroke="#1e1e1e"><path d="M2.5 7.5V1H6" stroke-width="1"/><path d="M5.8 0.5V7.5" stroke-width="1.8"/><path d="M0.5 7.8H8.5" stroke-width="1.3"/><path d="M4.3 8V11.3" stroke-width="1.1"/></svg><svg class="ic" style="left:1115px;top:94px" width="9" height="9" viewBox="0 0 9 9" fill="none" stroke="#1e1e1e" stroke-width="1.25"><path d="M0.5 0.5L8.5 8.5M8.5 0.5L0.5 8.5"/></svg>
<div class="b" style="left:872px;top:111px;width:260px;height:28px;border:1px solid #e4e4e4;border-top:2px solid #e9e9e9"></div>
<svg class="ic" style="left:877px;top:117px;overflow:visible" width="16" height="16" viewBox="0 0 16 16"><g transform="translate(-0.6 -0.2) rotate(45 8 8)"><path d="M4 6.65H17.2A1.35 1.35 0 0 1 17.2 9.35H4Z" fill="#6b6b6b"/><circle cx="2.8" cy="8" r="3.6" fill="#6b6b6b"/><path d="M-1.5 6.6H3.2V9.4H-1.5Z" fill="#fff"/><circle cx="16.9" cy="8" r="0.55" fill="#fff"/></g></svg>
<div class="b" style="left:896px;top:114px;width:235px;height:23px;background:#fff;border:1px solid #ababab"></div>
<span class="t cjt" style="left:899.5px;top:117.5px;font-size:12px;color:#9f9f9f;">过滤变量</span>
<div class="b" style="left:890px;top:142px;width:1px;height:19px;background:#a8a8a8;"></div>
<span class="t cjt" style="left:894.5px;top:142px;font-size:12px;color:#1e1e1e;">名称</span>
<div class="b" style="left:990px;top:142px;width:1px;height:19px;background:#a8a8a8;"></div>
<span class="t cjt" style="left:994.5px;top:142px;font-size:12px;color:#1e1e1e;">标签</span>
<div class="b" style="left:872px;top:163px;width:244px;height:1px;background:#a0a0a0;"></div>
<div class="b" style="left:872px;top:163px;width:244px;height:229px;overflow:hidden">
<div class="b" style="left:0px;top:0px;width:243.5px;height:23px;background:#e6e6e6;border:1px dotted #000"></div>
<span class="t" style="left:21.3px;top:2.70px;font-size:13px;color:#1e1e1e;letter-spacing:0.198px;">idcode</span>
<span class="t" style="left:121.5px;top:2.70px;font-size:13px;color:#1e1e1e;letter-spacing:-0.52px;">NLS ID</span>
<div class="b" style="left:0px;top:44px;width:244px;height:1px;background:#e4e4e4;"></div>
<span class="t" style="left:21.3px;top:24.70px;font-size:13px;color:#1e1e1e;letter-spacing:-0.395px;">age</span>
<span class="t" style="left:121.5px;top:24.70px;font-size:13px;color:#1e1e1e;letter-spacing:0.026px;">Age in current year</span>
<div class="b" style="left:0px;top:66px;width:244px;height:1px;background:#e4e4e4;"></div>
<span class="t" style="left:21.3px;top:46.70px;font-size:13px;color:#1e1e1e;letter-spacing:-0.363px;">race</span>
<span class="t" style="left:121.5px;top:46.70px;font-size:13px;color:#1e1e1e;letter-spacing:-1.049px;">Race</span>
<div class="b" style="left:0px;top:88px;width:244px;height:1px;background:#e4e4e4;"></div>
<span class="t" style="left:21.3px;top:68.70px;font-size:13px;color:#1e1e1e;letter-spacing:0.122px;">married</span>
<span class="t" style="left:121.5px;top:68.70px;font-size:13px;color:#1e1e1e;letter-spacing:0.289px;">Married</span>
<div class="b" style="left:0px;top:110px;width:244px;height:1px;background:#e4e4e4;"></div>
<span class="t" style="left:21.3px;top:90.70px;font-size:13px;color:#1e1e1e;letter-spacing:-0.143px;">never_married</span>
<span class="t" style="left:121.5px;top:90.70px;font-size:13px;color:#1e1e1e;letter-spacing:0.104px;">Never married</span>
<div class="b" style="left:0px;top:132px;width:244px;height:1px;background:#e4e4e4;"></div>
<span class="t" style="left:21.3px;top:112.70px;font-size:13px;color:#1e1e1e;letter-spacing:0.263px;">grade</span>
<span class="t" style="left:121.5px;top:112.70px;font-size:13px;color:#1e1e1e;letter-spacing:0.117px;">Current grade compl</span>
<div class="b" style="left:0px;top:154px;width:244px;height:1px;background:#e4e4e4;"></div>
<span class="t" style="left:21.3px;top:134.70px;font-size:13px;color:#1e1e1e;letter-spacing:0.196px;">collgrad</span>
<span class="t" style="left:121.5px;top:134.70px;font-size:13px;color:#1e1e1e;letter-spacing:0.085px;">College graduate</span>
<div class="b" style="left:0px;top:176px;width:244px;height:1px;background:#e4e4e4;"></div>
<span class="t" style="left:21.3px;top:156.70px;font-size:13px;color:#1e1e1e;letter-spacing:-0.2px;">south</span>
<span class="t" style="left:121.5px;top:156.70px;font-size:13px;color:#1e1e1e;letter-spacing:-0.146px;">Lives in the south</span>
<div class="b" style="left:0px;top:198px;width:244px;height:1px;background:#e4e4e4;"></div>
<span class="t" style="left:21.3px;top:178.70px;font-size:13px;color:#1e1e1e;letter-spacing:-0.686px;">smsa</span>
<span class="t" style="left:121.5px;top:178.70px;font-size:13px;color:#1e1e1e;letter-spacing:-0.436px;">Lives in SMSA</span>
<div class="b" style="left:0px;top:220px;width:244px;height:1px;background:#e4e4e4;"></div>
<span class="t" style="left:21.3px;top:200.70px;font-size:13px;color:#1e1e1e;letter-spacing:-0.706px;">c_city</span>
<span class="t" style="left:121.5px;top:200.70px;font-size:13px;color:#1e1e1e;letter-spacing:-0.103px;">Lives in a central city</span>
<div class="b" style="left:0px;top:242px;width:244px;height:1px;background:#e4e4e4;"></div>
<span class="t" style="left:21.3px;top:223.90px;font-size:13px;color:#1e1e1e;letter-spacing:-0.003px;">industry</span>
<span class="t" style="left:121.5px;top:223.90px;font-size:13px;color:#1e1e1e;letter-spacing:-0.035px;">Industry</span>
</div>
<div class="b" style="left:1116px;top:139px;width:16px;height:254px;background:#f0f0f0;"></div>
<svg class="ic" style="left:1119.5px;top:145px" width="9" height="6" viewBox="0 0 9 6" fill="none" stroke="#444" stroke-width="1.8"><path d="M0.7 5.2L4.5 1.3L8.3 5.2"/></svg>
<div class="b" style="left:1117px;top:156px;width:14px;height:121.5px;background:#cdcdcd;"></div>
<svg class="ic" style="left:1119.5px;top:381px" width="9" height="6" viewBox="0 0 9 6" fill="none" stroke="#444" stroke-width="1.8"><path d="M0.7 0.8L4.5 4.7L8.3 0.8"/></svg>
<div class="b" style="left:872px;top:393px;width:260px;height:16px;background:#f0f0f0;"></div>
<svg class="ic" style="left:877px;top:396.5px" width="6" height="9" viewBox="0 0 6 9" fill="none" stroke="#444" stroke-width="1.8"><path d="M5.2 0.7L1.3 4.5L5.2 8.3"/></svg>
<svg class="ic" style="left:1104px;top:396.5px" width="6" height="9" viewBox="0 0 6 9" fill="none" stroke="#444" stroke-width="1.8"><path d="M0.8 0.7L4.7 4.5L0.8 8.3"/></svg>
<div class="b" style="left:889px;top:394px;width:196px;height:14px;background:#cdcdcd;"></div>
<div class="b" style="left:871px;top:410px;width:261px;height:4px;background:#e9e9e9;"></div>
<span class="t cjt" style="left:877px;top:419px;font-size:14px;color:#185d92;">属性窗口</span>
<div class="b" style="left:0;top:328.1px"><svg class="ic" style="left:1098px;top:93px" width="9" height="12" viewBox="0 0 9 12" fill="none" stroke="#1e1e1e"><path d="M2.5 7.5V1H6" stroke-width="1"/><path d="M5.8 0.5V7.5" stroke-width="1.8"/><path d="M0.5 7.8H8.5" stroke-width="1.3"/><path d="M4.3 8V11.3" stroke-width="1.1"/></svg><svg class="ic" style="left:1115px;top:94px" width="9" height="9" viewBox="0 0 9 9" fill="none" stroke="#1e1e1e" stroke-width="1.25"><path d="M0.5 0.5L8.5 8.5M8.5 0.5L0.5 8.5"/></svg></div>
<div class="b" style="left:872px;top:439px;width:260px;height:1px;background:#e4e4e4;"></div>
<div class="b" style="left:872px;top:440px;width:82px;height:26px;background:#fdfdfd;border:1px solid #e2e2e2;border-top:none"></div>
<svg class="ic" style="left:880.5px;top:447.3px" width="9.6" height="12.2" viewBox="0 0 11 14"><path d="M2.6 6.5V4.2a2.9 2.9 0 0 1 5.8 0V6.5" fill="none" stroke="#6e6e6e" stroke-width="1.5"/><rect x="0.5" y="6.3" width="10" height="7" rx="0.8" fill="#6e6e6e"/></svg>
<div class="b" style="left:900px;top:443px;width:1px;height:20px;background:#dcdcdc;"></div>
<svg class="ic" style="left:912.5px;top:446.8px" width="8" height="12.4" viewBox="0 0 9 14" fill="none" stroke="#a2a2a2" stroke-width="2"><path d="M7.8 1L1.5 7L7.8 13"/></svg>
<svg class="ic" style="left:936px;top:446.8px" width="8" height="12.4" viewBox="0 0 9 14" fill="none" stroke="#484848" stroke-width="2"><path d="M1.2 1L7.5 7L1.2 13"/></svg>
<div class="b" style="left:872px;top:466px;width:260px;height:217px;background:#fff;border:1px solid #000"></div>
<div class="b" style="left:873px;top:467px;width:241px;height:215px;overflow:hidden">
<div class="b" style="left:0px;top:0px;width:241px;height:21px;background:#f0f0f0;"></div>
<svg class="ic" style="left:6px;top:7px" width="7" height="7" viewBox="0 0 7 7"><path d="M6.5 0.5V6.5H0.5Z" fill="#404040"/></svg>
<span class="t cjt" style="left:17px;top:1.7px;font-size:12px;color:#111;font-weight:bold;">变量</span>
<div class="b" style="left:0px;top:21px;width:14px;height:21px;background:#f0f0f0;"></div>
<div class="b" style="left:14px;top:41px;width:227px;height:1px;background:#ededed;"></div>
<div class="b" style="left:130px;top:21px;width:1px;height:21px;background:#ededed;"></div>
<span class="t cjt" style="left:17px;top:22.6px;font-size:12px;color:#7a7a7a;">名称</span>
<span class="t" style="left:134px;top:23.30px;font-size:13px;color:#7a7a7a;letter-spacing:0.05px;">idcode</span>
<div class="b" style="left:0px;top:42px;width:14px;height:21px;background:#f0f0f0;"></div>
<div class="b" style="left:14px;top:62px;width:227px;height:1px;background:#ededed;"></div>
<div class="b" style="left:130px;top:42px;width:1px;height:21px;background:#ededed;"></div>
<span class="t cjt" style="left:17px;top:43.6px;font-size:12px;color:#7a7a7a;">标签</span>
<span class="t" style="left:134px;top:44.30px;font-size:13px;color:#7a7a7a;letter-spacing:0.05px;">NLS ID</span>
<div class="b" style="left:0px;top:63px;width:14px;height:21px;background:#f0f0f0;"></div>
<div class="b" style="left:14px;top:83px;width:227px;height:1px;background:#ededed;"></div>
<div class="b" style="left:130px;top:63px;width:1px;height:21px;background:#ededed;"></div>
<span class="t cjt" style="left:17px;top:64.6px;font-size:12px;color:#7a7a7a;">类型</span>
<span class="t" style="left:134px;top:65.30px;font-size:13px;color:#7a7a7a;letter-spacing:0.05px;">int</span>
<div class="b" style="left:0px;top:84px;width:14px;height:21px;background:#f0f0f0;"></div>
<div class="b" style="left:14px;top:104px;width:227px;height:1px;background:#ededed;"></div>
<div class="b" style="left:130px;top:84px;width:1px;height:21px;background:#ededed;"></div>
<span class="t cjt" style="left:17px;top:85.6px;font-size:12px;color:#7a7a7a;">格式</span>
<span class="t" style="left:134px;top:86.30px;font-size:13px;color:#7a7a7a;letter-spacing:0.05px;">%8.0g</span>
<div class="b" style="left:0px;top:105px;width:14px;height:21px;background:#f0f0f0;"></div>
<div class="b" style="left:14px;top:125px;width:227px;height:1px;background:#ededed;"></div>
<div class="b" style="left:130px;top:105px;width:1px;height:21px;background:#ededed;"></div>
<span class="t cjt" style="left:17px;top:106.6px;font-size:12px;color:#7a7a7a;">值标签</span>
<div class="b" style="left:0px;top:126px;width:14px;height:21px;background:#f0f0f0;"></div>
<div class="b" style="left:14px;top:146px;width:227px;height:1px;background:#ededed;"></div>
<div class="b" style="left:130px;top:126px;width:1px;height:21px;background:#ededed;"></div>
<span class="t cjt" style="left:17px;top:127.6px;font-size:12px;color:#7a7a7a;">注释</span>
<div class="b" style="left:0px;top:147px;width:241px;height:21px;background:#f0f0f0;"></div>
<svg class="ic" style="left:6px;top:154px" width="7" height="7" viewBox="0 0 7 7"><path d="M6.5 0.5V6.5H0.5Z" fill="#404040"/></svg>
<span class="t cjt" style="left:17px;top:148.7px;font-size:12px;color:#111;font-weight:bold;">数据</span>
<div class="b" style="left:0px;top:168px;width:14px;height:21px;background:#f0f0f0;"></div>
<div class="b" style="left:14px;top:188px;width:227px;height:1px;background:#ededed;"></div>
<div class="b" style="left:130px;top:168px;width:1px;height:21px;background:#ededed;"></div>
<span class="t cjt" style="left:17px;top:169.6px;font-size:12px;color:#7a7a7a;">数据框</span>
<span class="t" style="left:134px;top:170.30px;font-size:13px;color:#7a7a7a;letter-spacing:0.05px;">default</span>
<div class="b" style="left:0px;top:189px;width:14px;height:21px;background:#f0f0f0;"></div>
<div class="b" style="left:14px;top:209px;width:227px;height:1px;background:#ededed;"></div>
<div class="b" style="left:130px;top:189px;width:1px;height:21px;background:#ededed;"></div>
<span class="t cjt" style="left:17px;top:190.6px;font-size:12px;color:#7a7a7a;">文件名</span>
<span class="t" style="left:134px;top:191.30px;font-size:13px;color:#7a7a7a;letter-spacing:0.05px;">nlsw88.dta</span>
<svg class="ic" style="left:5px;top:194px" width="6" height="10" viewBox="0 0 6 10"><path d="M0.7 0.9L5 5L0.7 9.1Z" fill="#fff" stroke="#404040" stroke-width="1"/></svg>
<div class="b" style="left:0px;top:210px;width:14px;height:21px;background:#f0f0f0;"></div>
<div class="b" style="left:14px;top:230px;width:227px;height:1px;background:#ededed;"></div>
<div class="b" style="left:130px;top:210px;width:1px;height:21px;background:#ededed;"></div>
<span class="t cjt" style="left:17px;top:211.6px;font-size:12px;color:#7a7a7a;">标签</span>
</div>
<div class="b" style="left:1114px;top:467px;width:17px;height:215px;background:#f0f0f0;"></div>
<svg class="ic" style="left:1118px;top:473.2px" width="9" height="6" viewBox="0 0 9 6" fill="none" stroke="#444" stroke-width="1.8"><path d="M0.7 5.2L4.5 1.3L8.3 5.2"/></svg>
<div class="b" style="left:1115px;top:484px;width:15px;height:106px;background:#cdcdcd;"></div>
<svg class="ic" style="left:1118px;top:671px" width="9" height="6" viewBox="0 0 9 6" fill="none" stroke="#444" stroke-width="1.8"><path d="M0.7 0.8L4.5 4.7L8.3 0.8"/></svg>
</body></html>
